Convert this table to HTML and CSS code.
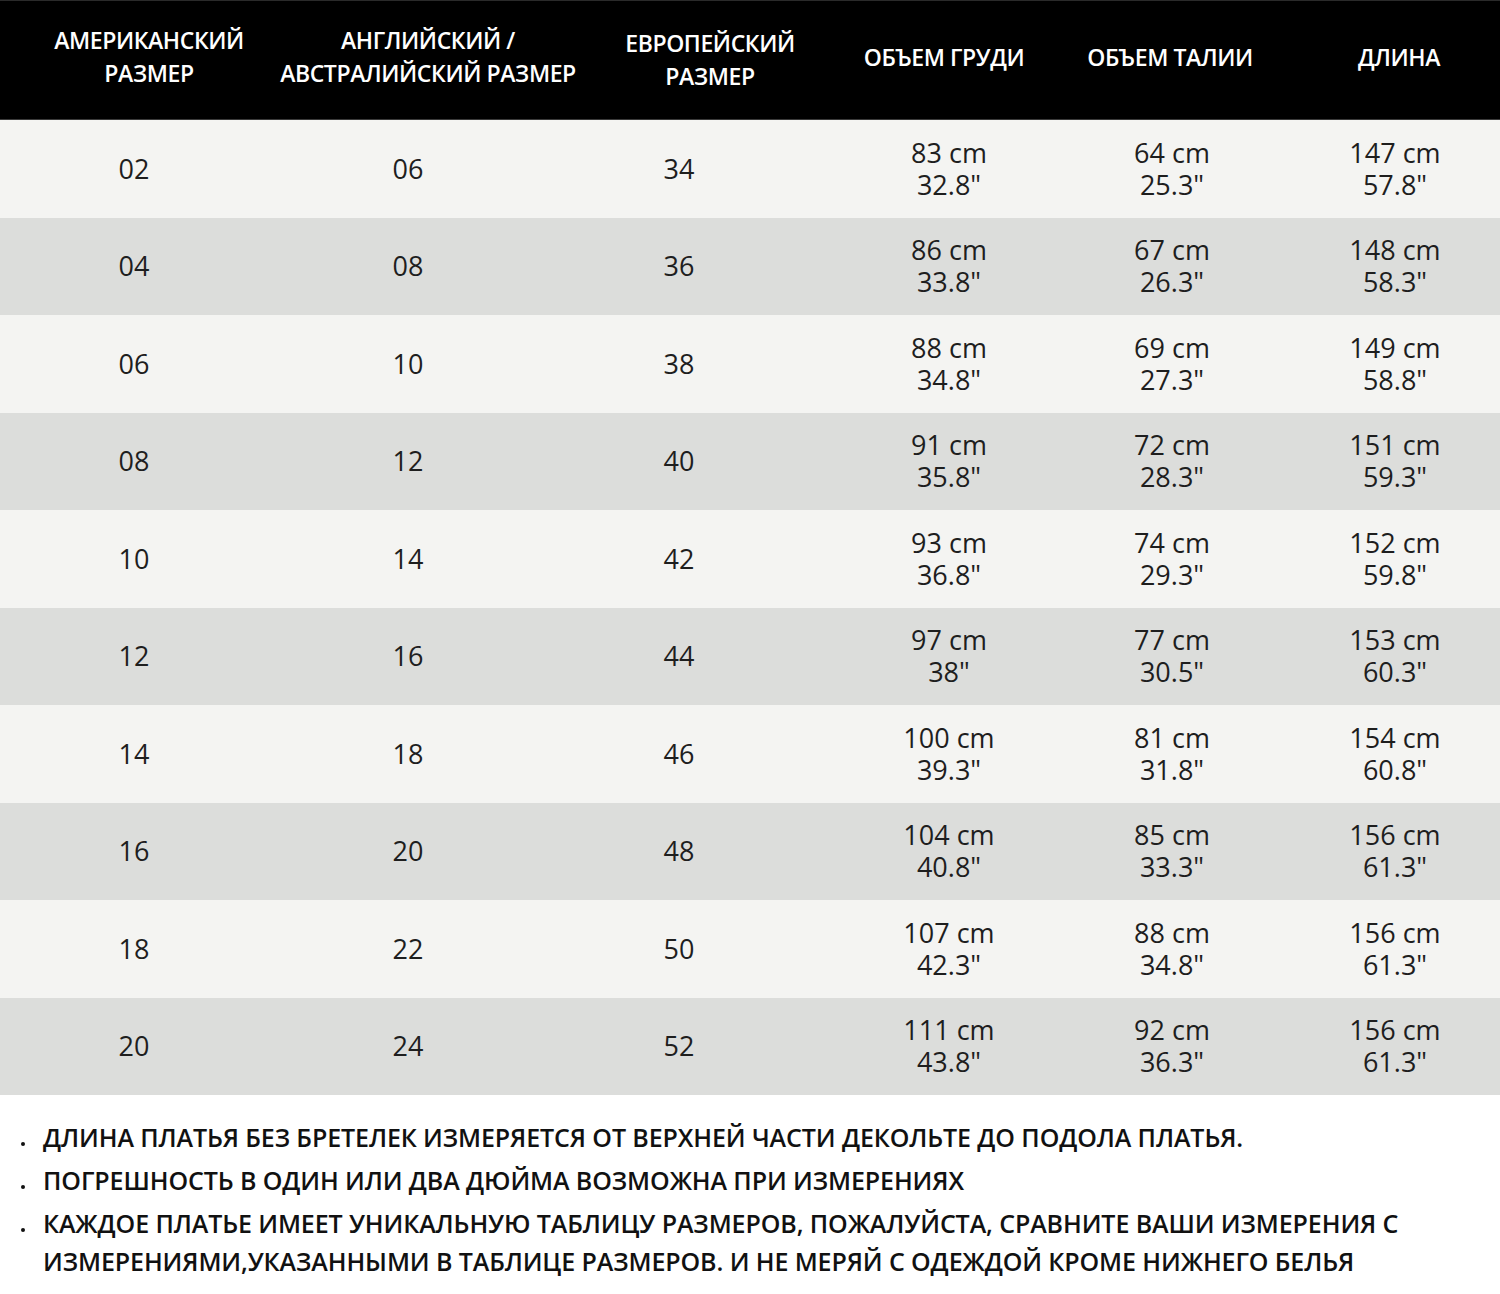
FILE: index.html
```html
<!DOCTYPE html>
<html lang="ru">
<head>
<meta charset="utf-8">
<title>Таблица размеров</title>
<link rel="stylesheet" href="styles.css">
</head>
<body>
<div class="chart">
  <div class="head">
    <div class="h h1">АМЕРИКАНСКИЙ<br>РАЗМЕР</div>
    <div class="h h2">АНГЛИЙСКИЙ /<br>АВСТРАЛИЙСКИЙ РАЗМЕР</div>
    <div class="h h3">ЕВРОПЕЙСКИЙ<br>РАЗМЕР</div>
    <div class="h h4">ОБЪЕМ ГРУДИ</div>
    <div class="h h5">ОБЪЕМ ТАЛИИ</div>
    <div class="h h6">ДЛИНА</div>
  </div>
  <div class="row light"><div class="c">02</div><div class="c">06</div><div class="c">34</div><div class="c">83 cm<br>32.8"</div><div class="c">64 cm<br>25.3"</div><div class="c c6">147 cm<br>57.8"</div></div>
  <div class="row dark"><div class="c">04</div><div class="c">08</div><div class="c">36</div><div class="c">86 cm<br>33.8"</div><div class="c">67 cm<br>26.3"</div><div class="c c6">148 cm<br>58.3"</div></div>
  <div class="row light"><div class="c">06</div><div class="c">10</div><div class="c">38</div><div class="c">88 cm<br>34.8"</div><div class="c">69 cm<br>27.3"</div><div class="c c6">149 cm<br>58.8"</div></div>
  <div class="row dark"><div class="c">08</div><div class="c">12</div><div class="c">40</div><div class="c">91 cm<br>35.8"</div><div class="c">72 cm<br>28.3"</div><div class="c c6">151 cm<br>59.3"</div></div>
  <div class="row light"><div class="c">10</div><div class="c">14</div><div class="c">42</div><div class="c">93 cm<br>36.8"</div><div class="c">74 cm<br>29.3"</div><div class="c c6">152 cm<br>59.8"</div></div>
  <div class="row dark"><div class="c">12</div><div class="c">16</div><div class="c">44</div><div class="c">97 cm<br>38"</div><div class="c">77 cm<br>30.5"</div><div class="c c6">153 cm<br>60.3"</div></div>
  <div class="row light"><div class="c">14</div><div class="c">18</div><div class="c">46</div><div class="c">100 cm<br>39.3"</div><div class="c">81 cm<br>31.8"</div><div class="c c6">154 cm<br>60.8"</div></div>
  <div class="row dark"><div class="c">16</div><div class="c">20</div><div class="c">48</div><div class="c">104 cm<br>40.8"</div><div class="c">85 cm<br>33.3"</div><div class="c c6">156 cm<br>61.3"</div></div>
  <div class="row light"><div class="c">18</div><div class="c">22</div><div class="c">50</div><div class="c">107 cm<br>42.3"</div><div class="c">88 cm<br>34.8"</div><div class="c c6">156 cm<br>61.3"</div></div>
  <div class="row dark"><div class="c">20</div><div class="c">24</div><div class="c">52</div><div class="c">111 cm<br>43.8"</div><div class="c">92 cm<br>36.3"</div><div class="c c6">156 cm<br>61.3"</div></div>
</div>
<ul class="notes">
  <li>ДЛИНА ПЛАТЬЯ БЕЗ БРЕТЕЛЕК ИЗМЕРЯЕТСЯ ОТ ВЕРХНЕЙ ЧАСТИ ДЕКОЛЬТЕ ДО ПОДОЛА ПЛАТЬЯ.</li>
  <li>ПОГРЕШНОСТЬ В ОДИН ИЛИ ДВА ДЮЙМА ВОЗМОЖНА ПРИ ИЗМЕРЕНИЯХ</li>
  <li>КАЖДОЕ ПЛАТЬЕ ИМЕЕТ УНИКАЛЬНУЮ ТАБЛИЦУ РАЗМЕРОВ, ПОЖАЛУЙСТА, СРАВНИТЕ ВАШИ ИЗМЕРЕНИЯ С<br>ИЗМЕРЕНИЯМИ,УКАЗАННЫМИ В ТАБЛИЦЕ РАЗМЕРОВ. И НЕ МЕРЯЙ С ОДЕЖДОЙ КРОМЕ НИЖНЕГО БЕЛЬЯ</li>
</ul>
</body>
</html>
```
FILE: styles.css
```css
html, body {
  margin: 0;
  padding: 0;
  background: #ffffff;
}
body {
  width: 1500px;
  font-family: "Open Sans", "Noto Sans", sans-serif;
  color: #1c1c1c;
}
.chart {
  width: 1500px;
}
.head {
  display: grid;
  grid-template-columns: 278px 300px 264px 204px 248px 1fr;
  align-items: center;
  height: 120px;
  padding-bottom: 6px;
  background: #000000;
  border-top: 1px solid #2a2a2a;
  box-sizing: border-box;
  border-bottom: 1px solid #3a3a3a;
}
.h {
  color: #ffffff;
  font-weight: 600;
  font-size: 23px;
  line-height: 33px;
  text-align: center;
  white-space: nowrap;
  letter-spacing: -0.4px;
}
.h1 { padding-left: 20px; }
.h3 { padding-top: 6px; }
.h6 { padding-left: 4px; }
.row {
  display: grid;
  grid-template-columns: 268px 280px 262px 278px 168px 1fr;
  align-items: center;
  height: 97.5px;
}
.light { background: #f4f4f2; }
.dark { background: #dcdddb; }
.c {
  text-align: center;
  font-size: 27px;
  line-height: 32px;
  white-space: nowrap;
  color: #1e1e1e;
}
.c6 { padding-left: 34px; }
.notes {
  list-style: none;
  margin: 0;
  padding: 23px 0 0 43px;
}
.notes li {
  position: relative;
  font-size: 25px;
  font-weight: 600;
  line-height: 38px;
  margin-bottom: 5px;
  letter-spacing: -0.1px;
  color: #111111;
  white-space: nowrap;
}
.notes li::before {
  content: "";
  position: absolute;
  left: -22px;
  top: 24px;
  width: 4px;
  height: 4px;
  border-radius: 50%;
  background: #111111;
}
```
